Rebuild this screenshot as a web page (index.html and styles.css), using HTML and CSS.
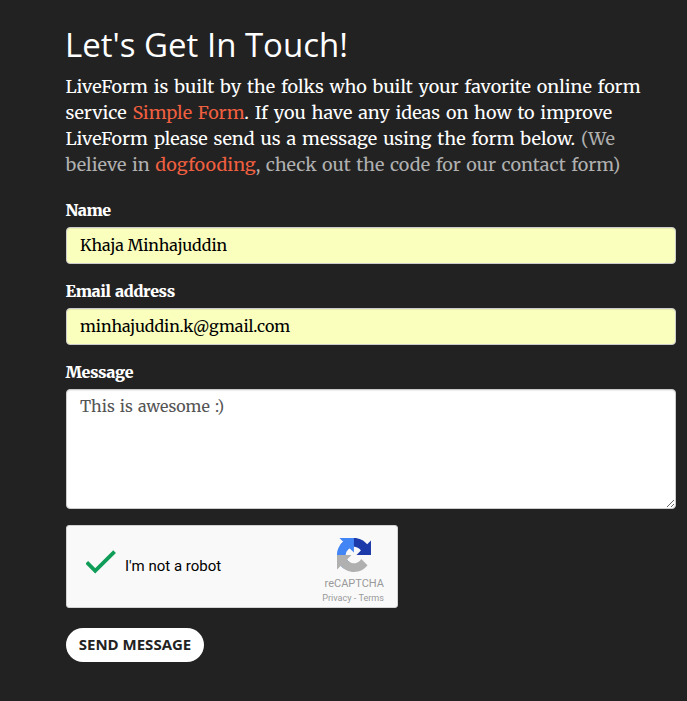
FILE: index.html
```html
<!DOCTYPE html>
<html lang="en">
<head>
<meta charset="utf-8">
<title>Let's Get In Touch!</title>
<link rel="stylesheet" href="styles.css">
</head>
<body>
<main class="contact">
  <h1 class="title">Let's Get In Touch!</h1>
  <p class="lead">
    <span class="line line-1">LiveForm is built by the folks who built your favorite online form</span>
    <span class="line line-2">service <a href="#">Simple Form</a>. If you have any ideas on how to improve</span>
    <span class="line line-3">LiveForm please send us a message using the form below. <span class="muted">(We</span></span>
    <span class="line line-4 muted">believe in <a href="#">dogfooding</a>, check out the code for our contact form)</span>
  </p>
  <form>
    <div class="group">
      <label for="name">Name</label>
      <input class="control filled" id="name" type="text" value="Khaja Minhajuddin">
    </div>
    <div class="group">
      <label for="email">Email address</label>
      <input class="control filled" id="email" type="text" value="minhajuddin.k@gmail.com">
    </div>
    <div class="group">
      <label for="message">Message</label>
      <textarea class="control message" id="message">This is awesome :)</textarea>
    </div>
    <div class="captcha">
      <svg class="check" viewBox="0 0 32 24" width="32" height="24"><path d="M.8 12.3 9.2 20.8 28.6 1.6" fill="none" stroke="#0f9d58" stroke-width="3.8"/></svg>
      <span class="robot">I'm not a robot</span>
      <div class="brand">
        <svg class="logo" viewBox="0 0 64 64" width="34" height="34">
          <path fill="#1c3aa9" d="M64 31.955l-.033-1.37V4.687l-7.16 7.16C50.948 4.674 42.033.093 32.05.093c-10.4 0-19.622 4.96-25.458 12.64l11.736 11.86a15.55 15.55 0 0 1 4.754-5.334c2.05-1.6 4.952-2.906 8.968-2.906.485 0 .86.057 1.135.163 4.976.393 9.288 3.14 11.828 7.124l-8.307 8.307L64 31.953"/>
          <path fill="#4285f4" d="M31.862.094l-1.37.033H4.594l7.16 7.16C4.58 13.147 0 22.06 0 32.046c0 10.4 4.96 19.622 12.64 25.458L24.5 45.768a15.55 15.55 0 0 1-5.334-4.754c-1.6-2.05-2.906-4.952-2.906-8.968 0-.485.057-.86.163-1.135.393-4.976 3.14-9.288 7.124-11.828l8.307 8.307L31.86.095"/>
          <path fill="#b0b0b0" d="M.001 32.045l.033 1.37v25.898l7.16-7.16c5.86 7.173 14.774 11.754 24.76 11.754 10.4 0 19.622-4.96 25.458-12.64l-11.736-11.86a15.55 15.55 0 0 1-4.754 5.334c-2.05 1.6-4.952 2.906-8.968 2.906-.485 0-.86-.057-1.135-.163-4.976-.393-9.288-3.14-11.828-7.124l8.307-8.307c-10.522.04-22.4.066-27.295-.005"/>
        </svg>
        <span class="brand-name">reCAPTCHA</span>
        <span class="brand-links">Privacy - Terms</span>
      </div>
    </div>
    <button class="send" type="button">SEND MESSAGE</button>
  </form>
</main>
</body>
</html>
```

FILE: styles.css
```css
* { box-sizing: border-box; }

body {
  margin: 0;
  min-height: 701px;
  background: #222;
  color: #fff;
  font-family: "Merriweather", "DejaVu Serif Condensed", "DejaVu Serif", serif;
}

.contact {
  width: 610px;
  margin-left: 66px;
  padding-top: 26px;
}

.title {
  margin: 0 0 10px -1px;
  font: 400 33px/38px "Open Sans", sans-serif;
}

.lead {
  margin: 0 0 20px -0.5px;
  font-size: 18px;
  line-height: 26px;
  word-spacing: 1.5px;
}

.line { display: block; white-space: nowrap; }
.line-3 { word-spacing: 1.65px; }
.line-4 { word-spacing: 1.25px; }
.muted { color: #b0b0b0; }
.lead a { color: #f05f40; text-decoration: none; }

label {
  display: block;
  margin: 0 0 5px -0.5px;
  font-size: 16px;
  line-height: 24px;
  font-weight: 900;
  letter-spacing: -0.35px;
  word-spacing: 1px;
}

.group { height: 66px; margin-bottom: 15px; }
.group:nth-child(3) { height: 149px; margin-bottom: 16px; }

.control {
  display: block;
  width: 610px;
  height: 37px;
  padding: 5px 13px 7px;
  border: 1px solid #ccc;
  border-radius: 4px;
  background: #fff;
  box-shadow: inset 0 1px 1px rgba(0, 0, 0, 0.075);
  color: #555;
  font-family: inherit;
  font-size: 16px;
  line-height: 23px;
  outline: 0;
}

.filled { background: #faffbd; color: #000; letter-spacing: -0.06px; }
.message { height: 120px; word-spacing: 1.3px; }

.captcha {
  display: flex;
  width: 332px;
  height: 83px;
  padding: 12px 13px 0 19px;
  border: 1px solid #d3d3d3;
  border-radius: 3px;
  background: #f9f9f9;
  color: #000;
  font-family: Roboto, sans-serif;
}

.check { margin-top: 12px; }
.robot { margin: 18px 0 0 7px; font-size: 15px; line-height: 20px; white-space: nowrap; }

.brand {
  display: flex;
  flex-direction: column;
  align-items: flex-end;
  margin-left: auto;
  color: #999;
}

.logo { margin-right: 13px; }
.brand-name { margin-top: 5px; font-size: 11px; line-height: 14px; }
.brand-links { margin-top: 1px; font-size: 9.1px; line-height: 12px; }

.send {
  display: block;
  width: 138px;
  height: 34px;
  margin-top: 20px;
  padding: 0 0 2px;
  border: 0;
  border-radius: 17px;
  background: #fff;
  color: #222;
  font: 700 15px/32px "Open Sans", sans-serif;
}
```
